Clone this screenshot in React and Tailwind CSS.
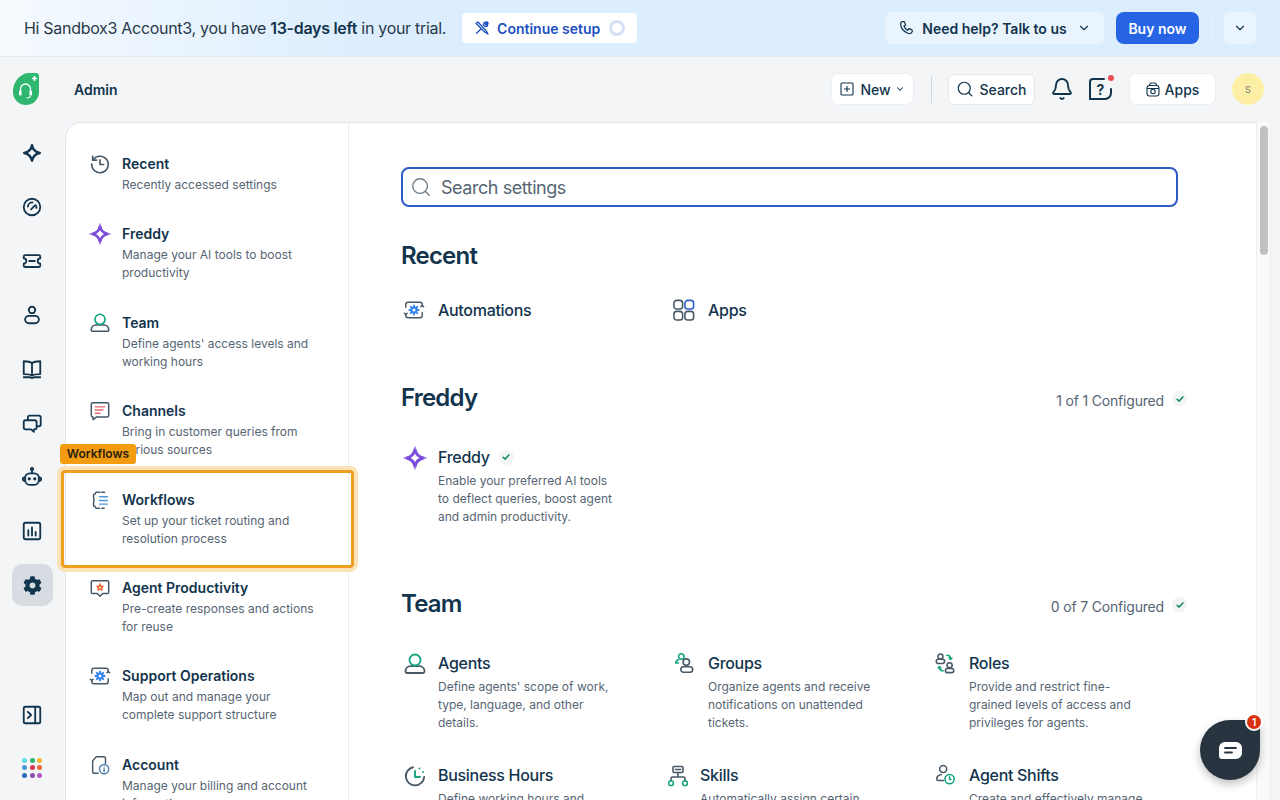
import React from 'react';
import { ChevronDown, Search, Bell } from 'lucide-react';
import { FaCog } from 'react-icons/fa';

const DARK = '#12344d';
const GREY = '#475867';
const GREEN = '#14a37f';

const Ico = ({ size = 22, children, color = DARK, sw = 2 }) => (
  <svg width={size} height={size} viewBox="0 0 24 24" fill="none" stroke={color} strokeWidth={sw} strokeLinecap="round" strokeLinejoin="round">
    {children}
  </svg>
);

const star = 'M12 3.5C12.9 8 16 11.1 20.5 12C16 12.9 12.9 16 12 20.5C11.1 16 8 12.9 3.5 12C8 11.1 11.1 8 12 3.5Z';

const SparkIcon = () => <Ico sw={2.6}><path d={star} /></Ico>;
const GaugeIcon = () => (
  <Ico>
    <circle cx="12" cy="12" r="9" />
    <path d="M7.5 11.5a5 5 0 0 1 5-4.5" />
    <path d="M11 14.5l4.5-4.5" />
    <path d="M16.3 10.5a5 5 0 0 1 .6 2.5" />
  </Ico>
);
const TicketIcon = () => (
  <Ico>
    <path d="M4.5 5.5h15a1.5 1.5 0 0 1 1.5 1.5v2.2a2.8 2.8 0 0 0 0 5.6V17a1.5 1.5 0 0 1-1.5 1.5h-15A1.5 1.5 0 0 1 3 17v-2.2a2.8 2.8 0 0 0 0-5.6V7a1.5 1.5 0 0 1 1.5-1.5Z" />
    <path d="M9 12h6" />
  </Ico>
);
const PersonIcon = () => (
  <Ico>
    <circle cx="12" cy="6.5" r="3.5" />
    <rect x="4.5" y="13" width="15" height="8" rx="4" />
  </Ico>
);
const BookIcon = () => (
  <Ico>
    <path d="M12 5.5C10.5 4 8 3.5 3 3.5v14c5 0 7.5.3 9 1.5 1.5-1.2 4-1.5 9-1.5v-14c-5 0-7.5.5-9 2Z" />
    <path d="M12 5.5V19" />
    <path d="M3 21h7l2 1 2-1h7" />
  </Ico>
);
const ChatsIcon = () => (
  <Ico>
    <path d="M7.5 8V6a2 2 0 0 1 2-2h10a2 2 0 0 1 2 2v7.5a2 2 0 0 1-2 2h-2" />
    <path d="M5 9h10a2 2 0 0 1 2 2v6a2 2 0 0 1-2 2h-1v2.5L11 19H5a2 2 0 0 1-2-2v-6a2 2 0 0 1 2-2Z" />
  </Ico>
);
const BotIcon = () => (
  <Ico>
    <circle cx="12" cy="3.5" r="1.3" />
    <path d="M12 5v3" />
    <rect x="4.5" y="8" width="15" height="12.5" rx="5" />
    <path d="M4.5 12.5H3.8a1.8 1.8 0 0 0 0 3.6h.7M19.5 12.5h.7a1.8 1.8 0 0 1 0 3.6h-.7" />
    <circle cx="9" cy="14" r=".8" fill={DARK} />
    <circle cx="15" cy="14" r=".8" fill={DARK} />
  </Ico>
);
const ChartIcon = () => (
  <Ico>
    <rect x="3" y="3" width="18" height="18" rx="2" />
    <path d="M8 11v6M12 8v9M16 13v4" />
  </Ico>
);
const PanelIcon = () => (
  <Ico>
    <rect x="3" y="3" width="18" height="18" rx="1.5" />
    <path d="M15.5 3v18" />
    <path d="M7.5 8.5 11 12l-3.5 3.5" />
  </Ico>
);
const AppDots = () => {
  const colors = ['#62dbe8', '#2fb46e', '#f6b62b', '#4c97dc', '#d9364f', '#e9682f', '#2b6cb8', '#8b4fb0', '#b45cc4'];
  return (
    <div className="grid grid-cols-3 gap-[2.5px]">
      {colors.map((c) => <span key={c} className="w-[5px] h-[5px] rounded-full" style={{ background: c }} />)}
    </div>
  );
};

const railTop = [SparkIcon, GaugeIcon, TicketIcon, PersonIcon, BookIcon, ChatsIcon, BotIcon, ChartIcon];

const HistoryIcon = () => (
  <Ico color={GREY} sw={1.8}>
    <path d="M4.5 7.5A9 9 0 1 1 3 12" />
    <path d="M4 3.5v4.3h4.3" />
    <path d="M12 7.5V12.5h4" />
  </Ico>
);
const FreddyIcon = ({ size = 22 }) => (
  <Ico size={size} color="#7c4ddb" sw={3}>
    <path d={star} />
    <path d="M12 1v2M12 21v2M1 12h2M21 12h2" stroke="#a77bf0" strokeWidth={1.5} />
  </Ico>
);
const TeamIcon = ({ size = 22 }) => (
  <Ico size={size} color={GREY} sw={1.8}>
    <path d="M7.5 14.2h9A5 5 0 0 1 21.5 19v.5a1.5 1.5 0 0 1-1.5 1.5H4a1.5 1.5 0 0 1-1.5-1.5V19a5 5 0 0 1 5-4.8Z" />
    <circle cx="12" cy="8" r="5.5" stroke={GREEN} fill="#fff" />
  </Ico>
);
const ChannelsIcon = () => (
  <Ico color={GREY} sw={1.6}>
    <path d="M4 3h16a1.5 1.5 0 0 1 1.5 1.5V17a1.5 1.5 0 0 1-1.5 1.5H8.5L4.5 21.5V18.5H4A1.5 1.5 0 0 1 2.5 17V4.5A1.5 1.5 0 0 1 4 3Z" />
    <path d="M7 7.5h10M7 11h8M7 14.5h5" stroke="#e2686f" />
  </Ico>
);
const WorkflowIcon = () => (
  <Ico color={GREY} sw={1.6}>
    <path d="M12 3.5H8a1 1 0 0 0-1 1c0 1-1 1.5-2 1.5v3.5c0 1 .5 1.5.5 2.5s-.5 2-.5 3v3.5c1 0 2 .5 2 1.5a1 1 0 0 0 1 1h3.5" />
    <path d="M14 3.5h3M14 21h2.5" />
    <path d="M11.5 8.5H20M11.5 12.5H20M11.5 16.5H20" stroke="#4c97dc" />
  </Ico>
);
const ProductivityIcon = () => (
  <Ico color={GREY} sw={1.6}>
    <path d="M4 4h16a1.5 1.5 0 0 1 1.5 1.5v11A1.5 1.5 0 0 1 20 18h-5l-3 3-3-3H4a1.5 1.5 0 0 1-1.5-1.5v-11A1.5 1.5 0 0 1 4 4Z" />
    <path d="M12 7.5l1.3 2.2 2.5.5-1.7 1.900.3 2.500-2.400-1-2.400 1 .3-2.500-1.700-1.900 2.500-.5L12 7.5Z" fill="#e9682f" stroke="#e9682f" strokeWidth={1} />
    <circle cx="12" cy="11.5" r="1" fill="#fff" stroke="none" />
  </Ico>
);
const OperationsIcon = ({ size = 22 }) => (
  <Ico size={size} color={GREY} sw={1.6}>
    <path d="M3 9V6a2.5 2.5 0 0 1 2.5-2.5h13A2.500 2.500 0 0 1 21 6v1.500" />
    <path d="M21 15v3a2.5 2.5 0 0 1-2.5 2.5h-13A2.500 2.500 0 0 1 3 18v-1.500" />
    <path d="M1.5 15.5 3 17l1.5-1.5M19.5 8.500 21 7l1.500 1.500" />
    <circle cx="12" cy="12" r="2.8" stroke="#2f80ed" strokeWidth={2.2} />
    <path d="M12 7v1.500M12 15.500V17M7 12h1.500M15.500 12H17M8.500 8.500l1 1M14.500 14.500l1 1M15.500 8.500l-1 1M9.500 14.500l-1 1" stroke="#2f80ed" strokeWidth={2} />
  </Ico>
);
const AccountIcon = () => (
  <Ico color={GREY} sw={1.6}>
    <path d="M10 21H6a2 2 0 0 1-2-2V7.5L8 3h8a2 2 0 0 1 2 2v5" />
    <circle cx="16.5" cy="16.5" r="5" stroke="#4c7fb0" />
    <path d="M16.5 16v3M16.5 13.8v.1" stroke="#4c7fb0" />
  </Ico>
);
const AppsGridIcon = () => (
  <Ico color={GREY} sw={1.7}>
    <rect x="1" y="1.5" width="9.5" height="9.5" rx="3" />
    <rect x="13" y="1.5" width="9.5" height="9.5" rx="3" stroke="#2b5fc4" />
    <rect x="1" y="13.5" width="9.5" height="9.5" rx="3" />
    <rect x="13" y="13.5" width="9.5" height="9.5" rx="3" />
  </Ico>
);
const GroupsIcon = () => (
  <Ico color={GREY} sw={1.7}>
    <circle cx="14.5" cy="11" r="3.5" />
    <rect x="8.5" y="16" width="13" height="6" rx="3" />
    <circle cx="9" cy="5" r="3" stroke={GREEN} />
    <path d="M6 8.5c-2 .5-3 1.500-3 3.500h3" stroke={GREEN} />
  </Ico>
);
const BusinessHoursIcon = () => (
  <Ico size={24} color={GREY} sw={1.9}>
    <path d="M10 3.2A9.2 9.2 0 1 0 21.2 13" />
    <path d="M12 7v6h5" stroke={GREEN} />
    <path d="M16.5 4.5v.1M20 8v.1" stroke={GREEN} />
  </Ico>
);
const SkillsIcon = () => (
  <Ico size={24} color={GREY} sw={1.6}>
    <rect x="7" y="2.5" width="10" height="6" rx="1" />
    <path d="M9.5 5.5h5M12 8.500v4.500M5 17v-2.500a1.500 1.500 0 0 1 1.500-1.500h11a1.500 1.500 0 0 1 1.500 1.500V17" />
    <rect x="2.8" y="17" width="4.5" height="4.5" rx="1.5" stroke={GREEN} />
    <rect x="16.8" y="17" width="4.5" height="4.5" rx="1.5" stroke={GREEN} />
  </Ico>
);
const RolesIcon = () => (
  <Ico color={GREY} sw={1.7}>
    <circle cx="7" cy="5" r="2.8" />
    <rect x="2.5" y="8" width="9" height="4.5" rx="2.2" />
    <circle cx="17" cy="14.5" r="2.8" />
    <rect x="12.5" y="18" width="9" height="4.5" rx="2" />
    <path d="M14 3.5c2.5 0 4 1.500 4 4M16.500 6.500 18 8l1.500-1.500M10 20.500c-2.500 0-4-1.500-4-4M4.500 17.500 6 16l1.500 1.500" stroke={GREEN} />
  </Ico>
);
const ShiftsIcon = () => (
  <Ico color={GREY} sw={1.7}>
    <circle cx="10" cy="5.5" r="3.8" />
    <path d="M8 11.5c-3 .5-5 2.500-5 5 0 1 .5 1.500 1.500 1.500h6" />
    <circle cx="17" cy="16.5" r="5" stroke={GREEN} />
    <path d="M17 14v3h1.500" stroke={GREEN} />
  </Ico>
);

const SmallCheck = () => (
  <span className="inline-flex items-center justify-center w-[15px] h-[15px] rounded-full bg-[#f1f5f6]">
    <svg width="10" height="10" viewBox="0 0 12 12" fill="none" stroke="#10865f" strokeWidth="1.8" strokeLinecap="round" strokeLinejoin="round">
      <path d="M2.5 6.3 5 8.5l4.5-5" />
    </svg>
  </span>
);

const navItems = [
  { icon: HistoryIcon, title: 'Recent', desc: 'Recently accessed settings' },
  { icon: FreddyIcon, title: 'Freddy', desc: 'Manage your AI tools to boost productivity' },
  { icon: TeamIcon, title: 'Team', desc: "Define agents' access levels and working hours" },
  { icon: ChannelsIcon, title: 'Channels', desc: 'Bring in customer queries from various sources' },
  { icon: WorkflowIcon, title: 'Workflows', desc: 'Set up your ticket routing and resolution process', tour: true },
  { icon: ProductivityIcon, title: 'Agent Productivity', desc: 'Pre-create responses and actions for reuse' },
  { icon: OperationsIcon, title: 'Support Operations', desc: 'Map out and manage your complete support structure' },
  { icon: AccountIcon, title: 'Account', desc: 'Manage your billing and account information' },
];

const teamItems = [
  { icon: () => <TeamIcon size={24} />, title: 'Agents', desc: "Define agents' scope of work, type, language, and other details." },
  { icon: GroupsIcon, title: 'Groups', desc: 'Organize agents and receive notifications on unattended tickets.' },
  { icon: RolesIcon, title: 'Roles', desc: 'Provide and restrict fine-grained levels of access and privileges for agents.' },
  { icon: BusinessHoursIcon, title: 'Business Hours', desc: 'Define working hours and' },
  { icon: SkillsIcon, title: 'Skills', desc: 'Automatically assign certain', shifted: true },
  { icon: ShiftsIcon, title: 'Agent Shifts', desc: 'Create and effectively manage' },
];

const NavItem = ({ item }) => {
  const Icon = item.icon;
  return (
    <div className="relative flex pb-[30.4px] pl-[23px]">
      {item.tour && (
        <>
          <div className="absolute left-[-6px] top-[-46px] w-[76px] h-[20px] flex items-center justify-center rounded-[3px] bg-[#f39c12] text-[12px] font-semibold text-[#29210f] z-20 whitespace-nowrap">
            Workflows
          </div>
          <div className="absolute left-[-5px] top-[-20px] w-[293px] h-[98px] rounded-[4px] border-[3px] border-[#ee9f1f] shadow-[0_0_0_4px_#fbe3b8] z-10" />
        </>
      )}
      <div className="w-[33px] shrink-0 -mt-[1px]">
        <Icon />
      </div>
      <div className="w-[200px]">
        <div className="text-[14px] leading-[20px] font-semibold text-[#12344d]">{item.title}</div>
        <div className="mt-[2px] text-[12px] leading-[18px] text-[#566573]">{item.desc}</div>
      </div>
    </div>
  );
};

const SectionHead = ({ title, status }) => (
  <div className="flex items-center justify-between h-[32px]">
    <h2 className="text-[24px] leading-[32px] font-semibold tracking-[-0.8px] text-[#12344d]">{title}</h2>
    {status && (
      <div className="flex items-center gap-[8px] -mr-[9px] pt-[4px] text-[14px] tracking-[-0.18px] text-[#566573]">
        <span>{status}</span>
        <span className="-mt-[4px]"><SmallCheck /></span>
      </div>
    )}
  </div>
);

const SettingItem = ({ item }) => {
  const Icon = item.icon;
  return (
    <div className={`flex ${item.shifted ? '-ml-[5px]' : ''}`}>
      <div className={`${item.shifted ? 'w-[34px]' : 'w-[37px] pl-[2px]'} shrink-0 pt-[1px]`}>
        <Icon />
      </div>
      <div className="w-[180px]">
        <div className="flex items-center gap-[9px] text-[16px] leading-[24px] font-medium tracking-[-0.3px] text-[#12344d]">
          {item.title}
          {item.check && <SmallCheck />}
        </div>
        {item.desc && <p className="mt-[3px] text-[12px] leading-[18px] text-[#566573]">{item.desc}</p>}
      </div>
    </div>
  );
};

const gridCols = 'grid grid-cols-[270px_261px_1fr]';

export default function App() {
  return (
    <div className="relative h-[800px] w-[1280px] overflow-hidden flex flex-col bg-[#f3f5f7] font-['Inter',sans-serif]">
      {/* trial banner */}
      <div className="h-[57px] shrink-0 flex items-center justify-between pl-[24px] pr-[24px] border-b border-[#e6ebf0] bg-[linear-gradient(90deg,#f5fafe_0%,#dcedfe_30%,#dcedfe_100%)]">
        <div className="flex items-center">
          <p className="text-[16px] tracking-[-0.3px] text-[#283a4a]">
            Hi Sandbox3 Account3, you have <span className="font-semibold text-[#12344d]">13-days left</span> in your trial.
          </p>
          <button className="ml-[16px] h-[30px] w-[175px] pl-[12px] pr-[12px] flex items-center justify-between rounded-[4px] bg-white text-[14px] font-semibold text-[#1d4fc0]">
            <span className="flex items-center gap-[7px]">
              <svg width="16" height="16" viewBox="0 0 24 24" fill="none" stroke="#1d4fc0" strokeWidth="2" strokeLinecap="round" strokeLinejoin="round">
                <path d="M3 5l3-2 12 13 3 5-5-3L3 5Z" />
                <path d="M20 3l-5 1-1 3 3 3 3-1 1-5-3 3-1-1 3-3ZM10 14l-6 6" />
              </svg>
              Continue setup
            </span>
            <span className="w-[16px] h-[16px] rounded-full border-[3px] border-[#d5dff5]" />
          </button>
        </div>
        <div className="flex items-center">
          <button className="h-[32px] w-[218px] flex items-center justify-center gap-[7px] rounded-[6px] bg-[#e9f4fe] text-[14px] font-semibold text-[#12344d]">
            <svg width="16" height="16" viewBox="0 0 24 24" fill="none" stroke="#12344d" strokeWidth="1.8" strokeLinejoin="round">
              <path d="M5 2.5h3l2 5-2.500 2c1 2.500 3 5 5.500 6l2-2.500 4 1.500c1 .5 1.500 2 .5 3.500-1.500 3-4 3-7 1.500C7 17 3 12 2.500 7 2.300 5 3 3 5 2.500Z" />
            </svg>
            Need help? Talk to us
            <ChevronDown size={14} strokeWidth={2} className="ml-[3px]" />
          </button>
          <button className="ml-[12px] h-[32px] w-[83px] rounded-[8px] bg-[#2664e5] text-[14px] font-semibold text-white">Buy now</button>
          <div className="ml-[13px] h-[30px] w-px bg-[#e9f4fe]" />
          <button className="ml-[11px] h-[32px] w-[32px] flex items-center justify-center rounded-[6px] bg-[#e9f4fe]">
            <ChevronDown size={14} strokeWidth={2} color="#12344d" />
          </button>
        </div>
      </div>

      {/* header */}
      <div className="h-[65px] shrink-0 flex items-center justify-between pl-[13px] pr-[16px] pb-[1px]">
        <div className="flex items-center">
          <svg width="26" height="32" viewBox="0 0 26 32" className="-mt-[1px]">
            <path d="M14 0h9a3 3 0 0 1 3 3v16a13 13 0 0 1-26 0A19 19 0 0 1 14 0Z" fill="#2fb76f" />
            <path d="M7.5 19v-3a5 5 0 0 1 10 0v3" fill="none" stroke="#fff" strokeWidth="1.3" />
            <rect x="6" y="17.5" width="2.6" height="5" rx="1.3" fill="#fff" />
            <rect x="16.4" y="17.5" width="2.6" height="5" rx="1.3" fill="#fff" />
            <path d="M17.5 22.5c0 1.5-1.5 2.5-4 2.5" fill="none" stroke="#fff" strokeWidth="1.1" />
            <path d="M21.5 3v5M19 5.5h5" stroke="#fff" strokeWidth="1.5" />
          </svg>
          <span className="ml-[35px] text-[14px] font-semibold text-[#12344d]">Admin</span>
        </div>
        <div className="flex items-center text-[#12344d]">
          <button className="h-[30px] w-[81px] flex items-center justify-center gap-[6px] rounded-[6px] bg-white text-[14px] font-medium shadow-[0_0_0_1px_#ebeff3]">
            <svg width="14" height="14" viewBox="0 0 14 14" fill="none" stroke="#12344d" strokeWidth="1.1">
              <rect x="1" y="1" width="12" height="12" rx="1" />
              <path d="M7 4v6M4 7h6" />
            </svg>
            New
            <ChevronDown size={10} strokeWidth={2.5} className="-ml-[2px]" />
          </button>
          <div className="ml-[18px] h-[27px] w-px bg-[#cfd7df]" />
          <button className="ml-[16px] h-[31px] w-[87px] flex items-center justify-center gap-[5px] rounded-[6px] bg-white border border-[#e3e8ed] text-[14px] font-medium">
            <Search size={18} strokeWidth={1.6} />
            Search
          </button>
          <Bell size={24} strokeWidth={1.8} className="ml-[15px]" />
          <div className="relative ml-[15px] w-[24px] h-[22px]">
            <svg width="24" height="22" viewBox="0 0 24 22" fill="none" stroke="#12344d" strokeWidth="2">
              <path d="M15 1H4a3 3 0 0 0-3 3v17h15a6 6 0 0 0 6-6v-4" strokeLinecap="round" />
            </svg>
            <span className="absolute inset-0 flex items-center justify-center text-[14px] font-bold -ml-[1px]">?</span>
            <span className="absolute right-[-1px] top-[-3px] w-[6px] h-[6px] rounded-full bg-[#ee4f56]" />
          </div>
          <button className="ml-[17px] h-[30px] w-[85px] flex items-center justify-center gap-[5px] rounded-[6px] bg-white text-[14px] font-medium shadow-[0_0_0_1px_#ebeff3]">
            <svg width="14" height="15" viewBox="0 0 14 15" fill="none" stroke="#12344d" strokeWidth="1.1">
              <rect x="1" y="3.5" width="12" height="10.5" rx="2.5" />
              <path d="M3.5 3.5V3a2 2 0 0 1 2-2h3a2 2 0 0 1 2 2v.5M1 6.5h12" />
              <circle cx="7" cy="9.5" r="2.2" />
            </svg>
            Apps
          </button>
          <div className="ml-[17px] w-[32px] h-[32px] rounded-full bg-[#fdf0a6] flex items-center justify-center text-[12px] text-[#8a8f7a]">s</div>
        </div>
      </div>

      <div className="flex-1 min-h-0 flex pr-[9px]">
        {/* icon rail */}
        <div className="w-[65px] shrink-0 flex flex-col items-center pt-[4px] pb-[6px] pr-[1px]">
          {railTop.map((Icon, i) => (
            <div key={i} className="h-[54px] w-full flex items-center justify-center"><Icon /></div>
          ))}
          <div className="h-[54px] w-full flex items-center justify-center">
            <div className="w-[41px] h-[42px] rounded-[10px] bg-[#d6dce2] flex items-center justify-center">
              <FaCog size={19} color={DARK} />
            </div>
          </div>
          <div className="mt-auto h-[53px] w-full flex items-center justify-center"><PanelIcon /></div>
          <div className="h-[53px] w-full flex items-center justify-center"><AppDots /></div>
        </div>

        {/* settings card */}
        <div className="flex-1 min-w-0 flex rounded-tl-[16px] bg-white border-l border-t border-[#e2e6ea]">
          <div className="w-[283px] shrink-0 border-r border-[#e9edf1] pt-[31px]">
            {navItems.map((item) => <NavItem key={item.title} item={item} />)}
          </div>
          <div className="flex-1 min-w-0 pl-[52px] pr-[78px] pt-[44px]">
            <div className="h-[40px] flex items-center gap-[9px] pl-[7px] rounded-[8px] border-2 border-[#2c5cc5] bg-white">
              <Search size={22} strokeWidth={1.5} color="#6f7c87" />
              <span className="text-[18px] tracking-[-0.45px] text-[#566573]">Search settings</span>
            </div>

            <div className="mt-[33px]"><SectionHead title="Recent" /></div>
            <div className={`${gridCols} mt-[26px]`}>
              <SettingItem item={{ icon: () => <OperationsIcon />, title: 'Automations' }} />
              <SettingItem item={{ icon: AppsGridIcon, title: 'Apps' }} />
            </div>

            <div className="mt-[60px]"><SectionHead title="Freddy" status="1 of 1 Configured" /></div>
            <div className={`${gridCols} mt-[31px]`}>
              <SettingItem item={{ icon: () => <FreddyIcon size={24} />, title: 'Freddy', check: true, desc: 'Enable your preferred AI tools to deflect queries, boost agent and admin productivity.' }} />
            </div>

            <div className="mt-[62px]"><SectionHead title="Team" status="0 of 7 Configured" /></div>
            <div className={`${gridCols} mt-[31px] gap-y-[31px]`}>
              {teamItems.map((item) => <SettingItem key={item.title} item={item} />)}
            </div>
          </div>
        </div>

        {/* scrollbar */}
        <div className="w-[15px] shrink-0 bg-[#fafafa] border-x border-[#eceff2] pt-[4px] pl-[3px]">
          <div className="w-[8px] h-[129px] rounded-full bg-[#c1c1c1]" />
        </div>
      </div>

      {/* chat launcher */}
      <button className="absolute left-[1200px] top-[720px] w-[60px] h-[60px] rounded-[30px] rounded-tr-[6px] bg-[#27333e] shadow-[0_4px_8px_rgba(0,0,0,0.25)] flex items-center justify-center">
        <svg width="23" height="17" viewBox="0 0 23 17">
          <path d="M6 0h11a6 6 0 0 1 6 6v5a6 6 0 0 1-6 6H3a3 3 0 0 1-3-3V6a6 6 0 0 1 6-6Z" fill="#fff" />
          <path d="M6 6h11M6 10.5h7" stroke="#27333e" strokeWidth="1.8" strokeLinecap="round" />
        </svg>
        <span className="absolute right-[-3px] top-[-7px] w-[18px] h-[18px] rounded-full bg-[#d9310f] border-2 border-white text-[10px] font-semibold text-white flex items-center justify-center">1</span>
      </button>
    </div>
  );
}
